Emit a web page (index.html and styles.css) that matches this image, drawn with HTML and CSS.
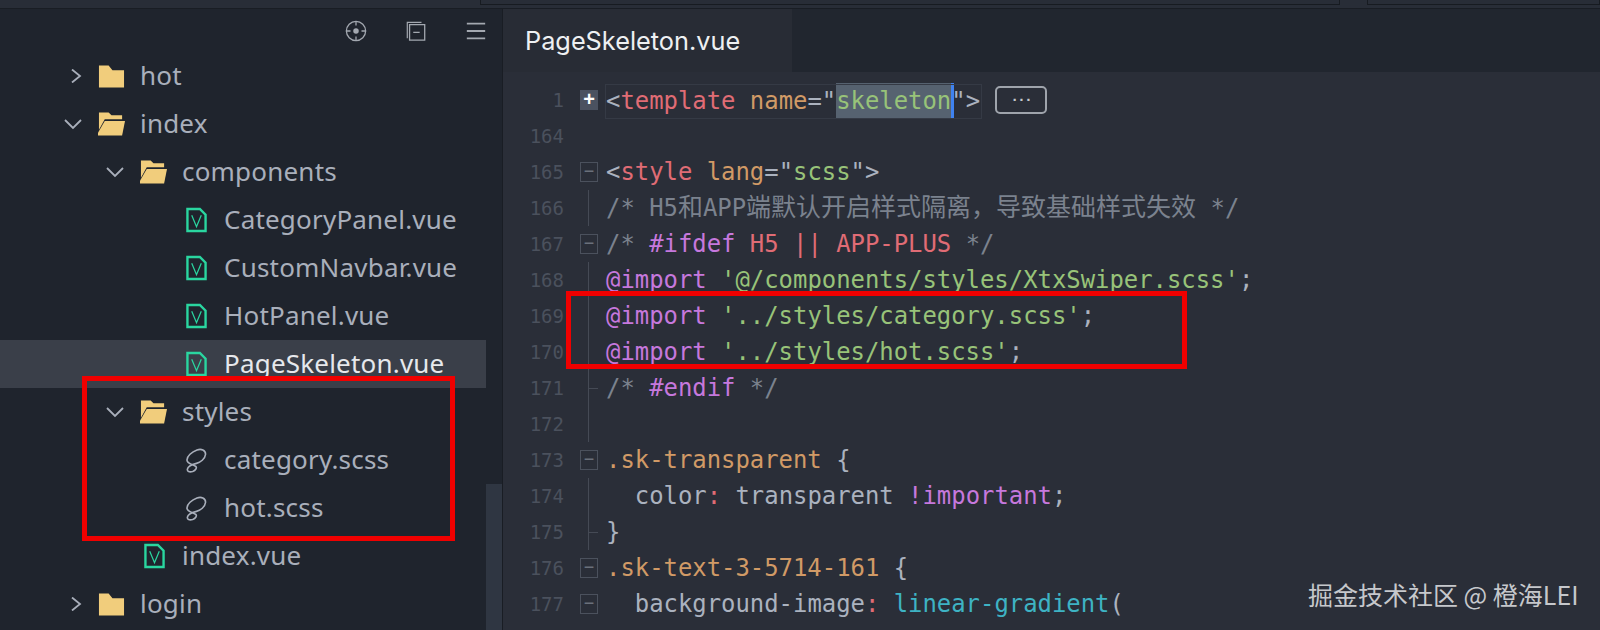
FILE: index.html
```html
<!DOCTYPE html>
<html lang="zh">
<head>
<meta charset="utf-8">
<title>PageSkeleton.vue</title>
<link rel="stylesheet" href="styles.css">
</head>
<body>
<header class="topbar">
  <div class="top-box top-box-a"></div>
  <div class="top-box top-box-b"></div>
</header>
<main class="app">
  <aside class="sidebar">
    <div class="tools">
      <svg class="tool" viewBox="0 0 24 24"><circle cx="12" cy="12" r="10.500" fill="none" stroke="#a3a8b0" stroke-width="1.4"/><circle cx="12" cy="12" r="3" fill="#a3a8b0"/><path d="M12 1v5M12 18v5M1 12h5M18 12h5" stroke="#a3a8b0" stroke-width="1.4"/></svg>
      <svg class="tool" viewBox="0 0 24 24"><path d="M2.500 20V2.500H18" fill="none" stroke="#a3a8b0" stroke-width="1.3"/><path d="M5 5h16.500v17H5z" fill="none" stroke="#a3a8b0" stroke-width="1.400"/><path d="M9 13.500h7" stroke="#a3a8b0" stroke-width="1.400"/></svg>
      <svg class="tool" viewBox="0 0 24 24"><path d="M2 4h20M2 12h20M2 20h20" stroke="#a3a8b0" stroke-width="2"/></svg>
    </div>
    <ul class="tree">
      <li class="row d0"><svg class="arrow" viewBox="0 0 18 14"><path d="M8 .5 16 7l-8 6.500"/></svg><svg class="fold" viewBox="0 0 28 24"><path d="M1 1h10l4 5h12v18H1z"/></svg><span>hot</span></li>
      <li class="row d0"><svg class="arrow" viewBox="0 0 18 14"><path d="M1 3 9 11l8-8"/></svg><svg class="fold" viewBox="0 0 28 24"><path d="M1 0h10l3 3h11v4H7L1 18z"/><path d="M7 9h21l-3 15H0v-3z"/></svg><span>index</span></li>
      <li class="row d1"><svg class="arrow" viewBox="0 0 18 14"><path d="M1 3 9 11l8-8"/></svg><svg class="fold" viewBox="0 0 28 24"><path d="M1 0h10l3 3h11v4H7L1 18z"/><path d="M7 9h21l-3 15H0v-3z"/></svg><span>components</span></li>
      <li class="row d2"><svg class="file" viewBox="0 0 22 26"><path class="page" d="M1.500 1.500h13l6 6v17h-19z"/><path class="v" d="M6 8l5 12 5-12"/></svg><span>CategoryPanel.vue</span></li>
      <li class="row d2"><svg class="file" viewBox="0 0 22 26"><path class="page" d="M1.500 1.500h13l6 6v17h-19z"/><path class="v" d="M6 8l5 12 5-12"/></svg><span>CustomNavbar.vue</span></li>
      <li class="row d2"><svg class="file" viewBox="0 0 22 26"><path class="page" d="M1.500 1.500h13l6 6v17h-19z"/><path class="v" d="M6 8l5 12 5-12"/></svg><span>HotPanel.vue</span></li>
      <li class="row d2 selected"><svg class="file" viewBox="0 0 22 26"><path class="page" d="M1.500 1.500h13l6 6v17h-19z"/><path class="v" d="M6 8l5 12 5-12"/></svg><span>PageSkeleton.vue</span></li>
      <li class="row d1"><svg class="arrow" viewBox="0 0 18 14"><path d="M1 3 9 11l8-8"/></svg><svg class="fold" viewBox="0 0 28 24"><path d="M1 0h10l3 3h11v4H7L1 18z"/><path d="M7 9h21l-3 15H0v-3z"/></svg><span>styles</span></li>
      <li class="row d2"><svg class="sass" viewBox="0 0 22 26"><path d="M20.500 7C20.500 2.500 16 1 11.500 2.500 6 4.500 1 9 1 13c0 4 6 4.500 9 6.500 2 1.500 0 4.500-3 5.500-3.500 1-6 0-5.500-2.500.5-3 5.500-5 9.500-6 4-1 9-4.500 9.500-9.500"/></svg><span>category.scss</span></li>
      <li class="row d2"><svg class="sass" viewBox="0 0 22 26"><path d="M20.500 7C20.500 2.500 16 1 11.500 2.500 6 4.500 1 9 1 13c0 4 6 4.500 9 6.500 2 1.500 0 4.500-3 5.500-3.500 1-6 0-5.500-2.500.5-3 5.500-5 9.500-6 4-1 9-4.500 9.500-9.500"/></svg><span>hot.scss</span></li>
      <li class="row d1 leaf"><svg class="file" viewBox="0 0 22 26"><path class="page" d="M1.500 1.500h13l6 6v17h-19z"/><path class="v" d="M6 8l5 12 5-12"/></svg><span>index.vue</span></li>
      <li class="row d0"><svg class="arrow" viewBox="0 0 18 14"><path d="M8 .5 16 7l-8 6.500"/></svg><svg class="fold" viewBox="0 0 28 24"><path d="M1 1h10l4 5h12v18H1z"/></svg><span>login</span></li>
    </ul>
    <div class="tree-scroll"></div>
  </aside>
  <section class="editor">
    <div class="tabs"><div class="tab">PageSkeleton.vue</div></div>
    <div class="code">
      <div class="line"><span class="ln">1</span><span class="gut"><i class="box plus">+</i></span><span class="src first"><span class="p">&lt;</span><span class="r">template</span> <span class="o">name</span><span class="p">="</span><span class="sel"><span class="g">skeleton</span></span><span class="p">"&gt;</span></span><span class="more">···</span></div>
      <div class="line"><span class="ln">164</span><span class="gut"></span><span class="src"></span></div>
      <div class="line"><span class="ln">165</span><span class="gut"><i class="box">−</i></span><span class="src"><span class="p">&lt;</span><span class="r">style</span> <span class="o">lang</span><span class="p">="</span><span class="g">scss</span><span class="p">"&gt;</span></span></div>
      <div class="line"><span class="ln">166</span><span class="gut"><i class="vl"></i></span><span class="src c">/* H5<span class="cjk">和</span>APP<span class="cjk">端默认开启样式隔离，导致基础样式失效</span> */</span></div>
      <div class="line"><span class="ln">167</span><span class="gut"><i class="box">−</i></span><span class="src"><span class="c">/* </span><span class="m">#ifdef</span> <span class="r">H5 || APP-PLUS</span> <span class="c">*/</span></span></div>
      <div class="line"><span class="ln">168</span><span class="gut"><i class="vl"></i></span><span class="src"><span class="m">@import</span> <span class="g">'@/components/styles/XtxSwiper.scss'</span><span class="p">;</span></span></div>
      <div class="line"><span class="ln">169</span><span class="gut"><i class="vl"></i></span><span class="src"><span class="m">@import</span> <span class="g">'../styles/category.scss'</span><span class="p">;</span></span></div>
      <div class="line"><span class="ln">170</span><span class="gut"><i class="vl"></i></span><span class="src"><span class="m">@import</span> <span class="g">'../styles/hot.scss'</span><span class="p">;</span></span></div>
      <div class="line"><span class="ln">171</span><span class="gut"><i class="vl end"></i></span><span class="src"><span class="c">/* </span><span class="m">#endif</span> <span class="c">*/</span></span></div>
      <div class="line"><span class="ln">172</span><span class="gut"><i class="vl"></i></span><span class="src"></span></div>
      <div class="line"><span class="ln">173</span><span class="gut"><i class="box">−</i></span><span class="src"><span class="o">.sk-transparent</span> <span class="p">{</span></span></div>
      <div class="line"><span class="ln">174</span><span class="gut"><i class="vl"></i></span><span class="src">  <span class="p">color</span><span class="r">:</span> <span class="p">transparent</span> <span class="m">!important</span><span class="p">;</span></span></div>
      <div class="line"><span class="ln">175</span><span class="gut"><i class="vl end"></i></span><span class="src"><span class="p">}</span></span></div>
      <div class="line"><span class="ln">176</span><span class="gut"><i class="box">−</i></span><span class="src"><span class="o">.sk-text-3-5714-161</span> <span class="p">{</span></span></div>
      <div class="line"><span class="ln">177</span><span class="gut"><i class="box">−</i></span><span class="src">  <span class="p">background-image</span><span class="r">:</span> <span class="t">linear-gradient</span><span class="p">(</span></span></div>
    </div>
  </section>
</main>
<div class="mark mark-tree"></div>
<div class="mark mark-code"></div>
<div class="watermark">掘金技术社区 @ 橙海LEI</div>
</body>
</html>
```

FILE: styles.css
```css
* { box-sizing: border-box; }
html, body { margin: 0; height: 630px; overflow: hidden; }
body { background: #1f242d; position: relative; font-family: "Noto Sans", "Noto Sans CJK SC", sans-serif; }

.topbar { height: 9px; background: #282d37; border-bottom: 1px solid #191d24; display: flex; padding-left: 480px; gap: 27px; }
.top-box { height: 5px; border: 1px solid #171b21; border-top: 0; }
.top-box-a { width: 860px; }
.top-box-b { flex: 1; }

.app { display: flex; height: 621px; }

.sidebar { width: 503px; flex: none; background: #1f242d; border-right: 1px solid #191d24; position: relative; overflow: hidden; }
.tools { height: 43px; display: flex; justify-content: flex-end; align-items: center; gap: 38px; padding: 0 15px 0 0; }
.tool { width: 22px; height: 22px; }

.tree { list-style: none; margin: 0; padding: 0 16px 0 0; }
.row { height: 48px; display: flex; align-items: center; font-size: 26px; color: #a9afbb; white-space: nowrap; }
.row span { letter-spacing: .2px; margin-bottom: 2px; }
.d0 { padding-left: 64px; }
.d1 { padding-left: 106px; }
.d2 { padding-left: 186px; }
.d1.leaf { padding-left: 144px; }
.selected { background: #3a3f49; color: #e6e8ec; }
.arrow { width: 18px; height: 14px; margin-right: 16px; flex: none; }
.arrow path { fill: none; stroke: #a9afbb; stroke-width: 1.8; }
.fold { width: 27px; height: 24px; margin-right: 15px; flex: none; }
.fold path { fill: #f1cd7c; }
.file, .sass { width: 21px; height: 26px; margin-right: 17px; flex: none; }
.page { fill: none; stroke: #2ad6a0; stroke-width: 2.5; }
.v { fill: none; stroke: #2ad6a0; stroke-width: 1.3; }
.sass path { fill: none; stroke: #a9afbb; stroke-width: 1.7; }
.tree-scroll { position: absolute; right: 0; top: 475px; width: 16px; height: 146px; background: #2f3642; }

.editor { flex: 1; min-width: 0; background: #2a2e38; }
.tabs { height: 63px; background: #21262f; }
.tab { width: 289px; height: 63px; background: #282c35; color: #eef0f2; font: 25.3px/63px Inter, sans-serif; padding-left: 22px; }

.code { padding-top: 10px; font: 23.9px/36px "DejaVu Sans Mono", "Noto Sans CJK SC", monospace; }
.line { height: 36px; display: flex; align-items: center; white-space: pre; }
.ln { width: 61px; text-align: right; color: #4b515d; flex: none; font-size: 19px; }
.gut { width: 42px; padding-left: 16px; align-self: stretch; flex: none; display: flex; align-items: center; }
.box { width: 18px; height: 20px; border: 1px solid #4b515d; color: #6a707b; font: 18px/17px "Liberation Sans", sans-serif; text-align: center; display: block; }
.plus { background: #4b5260; color: #fff; border: 0; font-weight: 700; line-height: 19px; font-size: 20px; }
.vl { width: 1px; height: 100%; background: #454a55; position: relative; margin-left: 8px; }
.vl.end::after { content: ""; position: absolute; left: 0; top: 50%; width: 10px; height: 1px; background: #454a55; }
.src { color: #abb2bf; }
.first { outline: 1px solid #353a45; line-height: 33px; padding-right: 1px; margin-top: 2px; }
.p { color: #abb2bf; }
.r { color: #e06c75; }
.o { color: #d19a66; }
.g { color: #98c379; }
.c { color: #7b828e; }
.m { color: #c678dd; }
.t { color: #3eb3c4; }
.cjk { font-size: 25px; }
.sel { background: #566270; box-shadow: 3px 0 0 #3f82f0; padding: 4px 0; }
.more { margin-left: 14px; width: 52px; height: 28px; border: 2px solid #9fa4ac; border-radius: 5px; color: #c3c7cd; font-size: 13px; font-weight: 700; letter-spacing: -1px; line-height: 24px; text-align: center; }

.mark { position: absolute; border: 5px solid #f00000; pointer-events: none; }
.mark-tree { left: 82px; top: 376px; width: 373px; height: 165px; }
.mark-code { left: 566px; top: 291px; width: 621px; height: 78px; }
.watermark { position: absolute; left: 1308px; top: 578px; font-size: 25px; color: #c6c8cc; line-height: 32px; font-family: "Noto Sans CJK SC", sans-serif; }
```
